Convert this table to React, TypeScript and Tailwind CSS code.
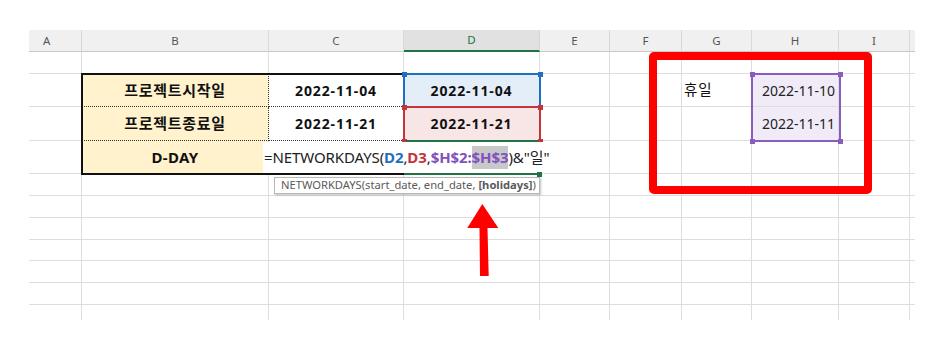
import React from 'react';

const LETTERS = ['A', 'B', 'C', 'D', 'E', 'F', 'G', 'H', 'I', ''];
const ROWS = 12;
const COLS = 10;

function cellContent(r: number, c: number): { cls: string; node: React.ReactNode } {
  const edgeR = c < COLS - 1 ? 'border-r' : '';
  const edgeB = r < ROWS - 1 ? 'border-b' : '';
  const base = `${edgeR} ${edgeB} border-[#dddddd]`;

  if (r === 0) {
    if (c === 3) {
      return {
        cls: `${edgeR} border-b-2 border-r-[#d4d4d4] border-b-[#217346] bg-[#e1e1e1] text-[#217346] justify-center text-[11.5px]`,
        node: LETTERS[c],
      };
    }
    if (c === 0) {
      return {
        cls: `${edgeR} border-b border-r-[#d9d9d9] border-b-[#c8c8c8] bg-[#f0f0f0] text-[#555] justify-start pl-[14px] text-[11.5px]`,
        node: LETTERS[c],
      };
    }
    return {
      cls: `${edgeR} border-b border-r-[#d9d9d9] border-b-[#c8c8c8] bg-[#f0f0f0] text-[#555] justify-center text-[11.5px]`,
      node: LETTERS[c],
    };
  }

  if (c === 1 && (r === 2 || r === 3)) {
    return {
      cls: 'border-r border-b border-dotted border-[#333] bg-[#fff2cc] justify-center font-bold text-[15px] tracking-[0.7px] text-[#111]',
      node: r === 2 ? '프로젝트시작일' : '프로젝트종료일',
    };
  }
  if (c === 1 && r === 4) {
    return {
      cls: 'border-r border-b border-[#dddddd] bg-[#fff2cc] justify-center font-bold text-[15px] tracking-[0.3px] text-[#111]',
      node: 'D-DAY',
    };
  }
  if (c === 2 && (r === 2 || r === 3)) {
    return {
      cls: 'border-r border-b border-dotted border-r-[#dddddd] border-b-[#333] bg-white justify-center font-bold text-[14px] tracking-[0.9px] text-[#111]',
      node: r === 2 ? '2022-11-04' : '2022-11-21',
    };
  }
  if (c === 3 && r === 2) {
    return {
      cls: `${base} bg-[#e3eef9] justify-center font-bold text-[14px] tracking-[0.9px] text-[#111]`,
      node: '2022-11-04',
    };
  }
  if (c === 3 && r === 3) {
    return {
      cls: `${base} bg-[#f8e6e6] justify-center font-bold text-[14px] tracking-[0.9px] text-[#111]`,
      node: '2022-11-21',
    };
  }
  if (c === 6 && r === 2) {
    return {
      cls: `${base} justify-start pl-[2px] text-[14.5px] tracking-[0.8px] text-[#111]`,
      node: '휴일',
    };
  }
  if (c === 7 && (r === 2 || r === 3)) {
    return {
      cls: `${base} bg-[#f1ebf7] justify-end pr-[3px] text-[14px] text-[#222]`,
      node: r === 2 ? '2022-11-10' : '2022-11-11',
    };
  }
  return { cls: base, node: null };
}

function RangeBox({
  className,
  color,
  corners,
}: {
  className: string;
  color: string;
  corners: ('tl' | 'tr' | 'bl' | 'br')[];
}) {
  return (
    <div className={`absolute border-2 ${className}`} style={{ borderColor: color }}>
      {corners.includes('tl') && (
        <div className="absolute -left-[3.5px] -top-[3.5px] w-[5px] h-[5px]" style={{ backgroundColor: color }} />
      )}
      {corners.includes('tr') && (
        <div className="absolute -right-[3.5px] -top-[3.5px] w-[5px] h-[5px]" style={{ backgroundColor: color }} />
      )}
      {corners.includes('bl') && (
        <div className="absolute -left-[3.5px] -bottom-[3.5px] w-[5px] h-[5px]" style={{ backgroundColor: color }} />
      )}
      {corners.includes('br') && (
        <div className="absolute -right-[3.5px] -bottom-[3.5px] w-[5px] h-[5px]" style={{ backgroundColor: color }} />
      )}
    </div>
  );
}

export default function App() {
  const cells: React.ReactNode[] = [];
  for (let r = 0; r < ROWS; r++) {
    for (let c = 0; c < COLS; c++) {
      const { cls, node } = cellContent(r, c);
      cells.push(
        <div key={`${r}-${c}`} className={`flex items-center overflow-hidden whitespace-nowrap ${cls}`}>
          {node}
        </div>
      );
    }
  }

  return (
    <div className="relative w-[950px] h-[347px] bg-white overflow-hidden font-['Noto_Sans','Noto_Sans_CJK_KR',sans-serif] text-[#111]">
      <div className="pt-[30px] pl-[29px]">
        <div className="grid w-[886px] grid-cols-[53px_187px_135px_136px_70px_72px_70px_87px_71px_5px] grid-rows-[22px_22px_33px_34px_33px_22px_22px_22px_21px_22px_22px_15px]">
          {cells}
        </div>
      </div>

      {/* table outer border */}
      <div className="absolute left-[81px] top-[73px] w-[324px] h-[102px] border-2 border-[#111]" />

      {/* blue range D2 */}
      <RangeBox className="left-[403px] top-[73px] w-[138px] h-[35px]" color="#1f6fc0" corners={['tl', 'tr']} />

      {/* red range D3 */}
      <RangeBox className="left-[403px] top-[106px] w-[138px] h-[36px]" color="#c3353b" corners={['tl', 'tr', 'bl', 'br']} />

      {/* active cell D4 top line */}
      <div className="absolute left-[406px] top-[140px] w-[132px] h-[2px] bg-[#217346]" />

      {/* cell editor */}
      <div className="absolute left-[263px] top-[142px] w-[297px] h-[31px] bg-white flex items-center pl-[1px] text-[15px] tracking-[-0.1px] whitespace-nowrap text-[#222]">
        <span>=NETWORKDAYS(</span>
        <span className="font-bold text-[#1f6fc0]">D2</span>
        <span>,</span>
        <span className="font-bold text-[#c3353b]">D3</span>
        <span>,</span>
        <span className="font-bold text-[#8250c0]">$H$2:</span>
        <span className="font-bold text-[#8250c0] bg-[#c8c8c8]">$H$3</span>
        <span>)&amp;"일"</span>
      </div>
      <div className="absolute left-[404px] top-[173px] w-[136px] h-[2px] bg-[#217346]">
        <div className="absolute -right-[2px] -top-[1.5px] w-[5px] h-[5px] bg-[#217346]" />
      </div>

      {/* tooltip */}
      <div className="absolute left-[274px] top-[177px] w-[266px] h-[17px] bg-white border border-[#b8b8b8] shadow-[1px_1px_2px_rgba(0,0,0,0.25)] flex items-center pl-[6px] text-[11.2px] text-[#5a5a5a] whitespace-nowrap">
        NETWORKDAYS(start_date, end_date, <span className="font-bold ml-[3px]">[holidays]</span>)
      </div>

      {/* purple range H2:H3 */}
      <RangeBox className="left-[751px] top-[73px] w-[90px] h-[69px]" color="#8a5cc0" corners={['tl', 'tr', 'bl', 'br']} />

      {/* red highlight box */}
      <div className="absolute left-[649px] top-[52px] w-[223px] h-[142px] border-[8px] border-[#ff0000] rounded-[5px]" />

      {/* red arrow */}
      <svg className="absolute left-[464px] top-[202px]" width="38" height="76" viewBox="0 0 38 76">
        <polygon points="18.3,2 34.3,26 23.5,26 24.7,74 16,74 15.5,26 3.3,26" fill="#ff0000" />
      </svg>
    </div>
  );
}
